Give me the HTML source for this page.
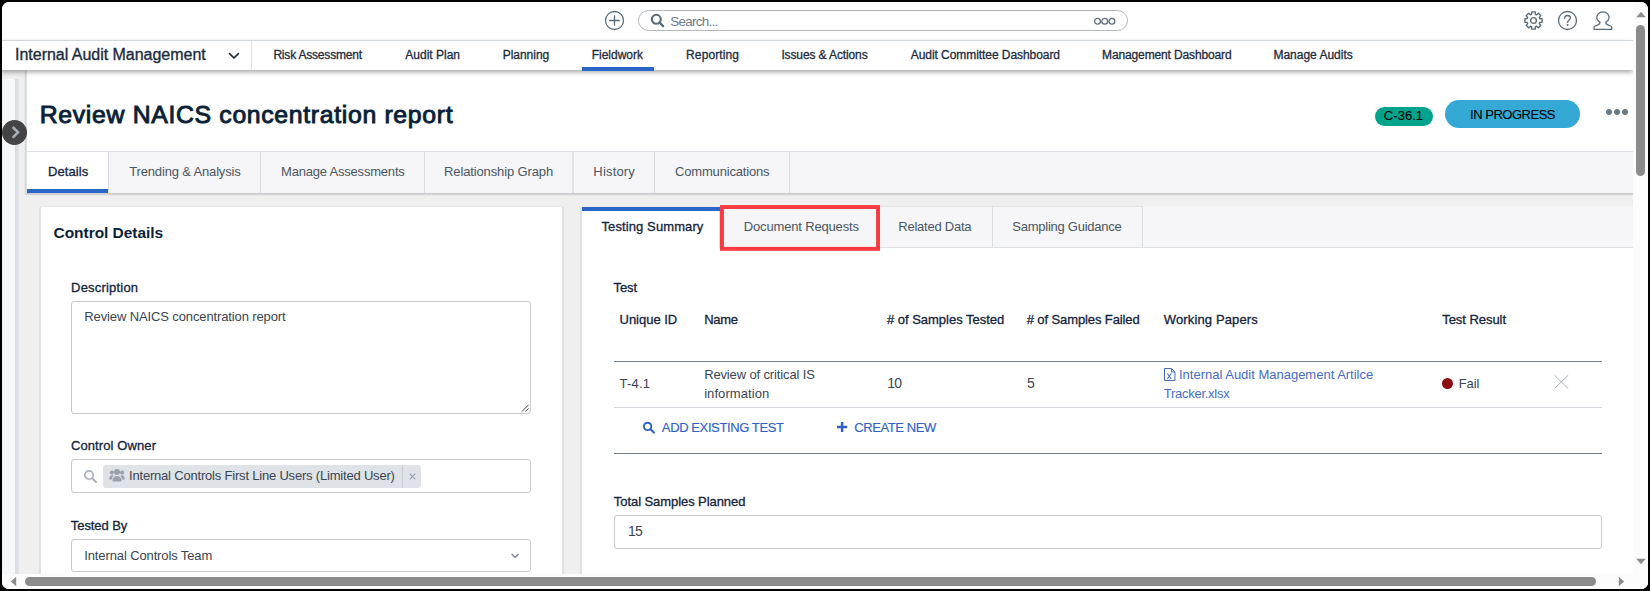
<!DOCTYPE html>
<html lang="en">
<head>
<meta charset="utf-8">
<title>Review NAICS concentration report</title>
<style>
html,body{margin:0;padding:0;width:1650px;height:591px;overflow:hidden;background:#000;font-family:"Liberation Sans",sans-serif;}
#win{position:absolute;left:2px;top:2px;width:1646px;height:587px;border-radius:7px;overflow:hidden;background:#fff;}
#pg{position:absolute;left:-2px;top:-2px;width:1650px;height:591px;}
#pg div,#pg svg{position:absolute;box-sizing:border-box;}
.t{white-space:pre;}
</style>
</head>
<body>
<div id="win"><div id="pg">

<!-- page background -->
<div style="left:0;top:70px;width:1633px;height:504px;background:#efefef;"></div>

<!-- collapsed left strip -->
<div style="left:3px;top:79px;width:12px;height:495px;background:#f6f7f8;border-top-right-radius:3px;"></div>
<div style="left:15px;top:79px;width:4px;height:495px;background:linear-gradient(90deg,#d9dde1 0,#dcdfe3 70%,#e8eaec 100%);"></div>

<!-- header card -->
<div style="left:26px;top:70px;width:1607px;height:123px;background:#fff;border-left:1px solid #dcdee0;box-shadow:0 1px 2px rgba(0,0,0,.32);"></div>
<!-- main tab bar -->
<div style="left:27px;top:151px;width:1606px;height:42px;background:#f6f6f8;border-top:1px solid #dde1e5;"></div>
<div style="left:27px;top:152px;width:81px;height:41px;background:#fff;"></div>
<div style="left:27px;top:193px;width:1606px;height:1px;background:#c9cbce;"></div>
<div style="left:27px;top:189px;width:81px;height:4px;background:#2866c8;"></div>
<div style="left:108px;top:152px;width:1px;height:41px;background:#dadee2;"></div>
<div style="left:260px;top:152px;width:1px;height:41px;background:#dadee2;"></div>
<div style="left:424px;top:152px;width:1px;height:41px;background:#dadee2;"></div>
<div style="left:572px;top:152px;width:2px;height:41px;background:#dfe2e6;"></div>
<div style="left:654px;top:152px;width:1px;height:41px;background:#dadee2;"></div>
<div style="left:789px;top:152px;width:1px;height:41px;background:#dadee2;"></div>

<!-- top bar -->
<div style="left:0;top:0;width:1633px;height:41px;background:#fff;border-bottom:1px solid #dfe4e8;"></div>
<!-- nav bar -->
<div style="left:0;top:41px;width:1633px;height:29px;background:#fff;box-shadow:0 2px 5px rgba(0,0,0,.36);"></div>
<div style="left:251px;top:41px;width:1px;height:29px;background:#dfe3e6;"></div>
<div style="left:582px;top:67px;width:72px;height:4px;background:#2866c8;z-index:2;"></div>
<!-- nav chevron -->
<svg style="left:227px;top:50px" width="14" height="12" viewBox="0 0 14 12"><path d="M2.6 3.6 L7 8 L11.4 3.6" fill="none" stroke="#1d2c3d" stroke-width="1.7" stroke-linecap="round" stroke-linejoin="round"/></svg>

<!-- plus circle -->
<svg style="left:604px;top:10px" width="21" height="21" viewBox="0 0 21 21"><circle cx="10.5" cy="10.5" r="9" fill="none" stroke="#5b6b79" stroke-width="1.3"/><path d="M10.5 5.2V15.8M5.2 10.5H15.8" stroke="#5b6b79" stroke-width="1.3" fill="none"/></svg>
<!-- search box -->
<div style="left:638px;top:10px;width:490px;height:21px;border:1px solid #b4b7ba;border-radius:11px;background:#fff;"></div>
<svg style="left:650px;top:13px" width="15" height="15" viewBox="0 0 15 15"><circle cx="6.3" cy="6.3" r="4.5" fill="none" stroke="#596b79" stroke-width="2.1"/><path d="M9.8 9.8 L13.1 13.1" stroke="#596b79" stroke-width="2.3" stroke-linecap="round"/></svg>
<svg style="left:1092px;top:16px" width="26" height="10" viewBox="0 0 26 10"><g fill="none" stroke="#5b6b79" stroke-width="1.3"><circle cx="5.5" cy="5.2" r="2.9"/><circle cx="12.7" cy="5.2" r="2.9"/><circle cx="19.9" cy="5.2" r="2.9"/></g></svg>

<!-- gear -->
<svg style="left:1523px;top:10px" width="21" height="21" viewBox="0 0 21 21"><g fill="none" stroke="#5b6b79" stroke-width="1.4" stroke-linejoin="round"><path d="M8.60 4.28 L8.75 1.88 L12.25 1.88 L12.40 4.28 L13.55 4.76 L15.36 3.16 L17.84 5.64 L16.24 7.45 L16.72 8.60 L19.12 8.75 L19.12 12.25 L16.72 12.40 L16.24 13.55 L17.84 15.36 L15.36 17.84 L13.55 16.24 L12.40 16.72 L12.25 19.12 L8.75 19.12 L8.60 16.72 L7.45 16.24 L5.64 17.84 L3.16 15.36 L4.76 13.55 L4.28 12.40 L1.88 12.25 L1.88 8.75 L4.28 8.60 L4.76 7.45 L3.16 5.64 L5.64 3.16 L7.45 4.76Z"/><circle cx="10.5" cy="10.5" r="2.9"/></g></svg>
<!-- help -->
<svg style="left:1557px;top:10px" width="21" height="21" viewBox="0 0 21 21"><circle cx="10.5" cy="10.5" r="9" fill="none" stroke="#5b6b79" stroke-width="1.3"/><path d="M7.7 8.3c0-1.7 1.2-2.8 2.9-2.8 1.6 0 2.8 1 2.8 2.5 0 2.1-2.8 2.3-2.8 4.4" fill="none" stroke="#5b6b79" stroke-width="1.3" stroke-linecap="round"/><circle cx="10.6" cy="15" r="0.95" fill="#5b6b79"/></svg>
<!-- user -->
<svg style="left:1592px;top:10px" width="22" height="21" viewBox="0 0 22 21"><path d="M8 12.2 C8 13.8 7 14.600 4.800 15.400 L3.100 16 Q2.050 16.350 2.050 17.400 V19.350 H19.750 V17.400 Q19.750 16.350 18.700 16 L17 15.400 C14.800 14.600 13.800 13.800 13.800 12.200 A6.150 5.500 0 1 0 8 12.200 Z" fill="none" stroke="#5b6b79" stroke-width="1.3" stroke-linejoin="round"/></svg>

<!-- toggle circle -->
<div style="left:2px;top:120px;width:25px;height:25px;border-radius:50%;background:#444446;"></div>
<svg style="left:8px;top:125px" width="14" height="15" viewBox="0 0 14 15"><path d="M4.700 2 L10 7.300 L4.700 12.600" fill="none" stroke="#a5aeb7" stroke-width="2.600" stroke-linecap="butt" stroke-linejoin="miter"/></svg>

<!-- badge + status -->
<div style="left:1375px;top:107px;width:58px;height:19px;border-radius:10px;background:#00a38c;"></div>
<div style="left:1445px;top:100px;width:135px;height:28px;border-radius:14px;background:#35a9d6;"></div>
<div style="left:1605.5px;top:108.7px;width:6.4px;height:6.4px;border-radius:50%;background:#6b7986;"></div>
<div style="left:1613.6px;top:108.7px;width:6.4px;height:6.4px;border-radius:50%;background:#6b7986;"></div>
<div style="left:1621.7px;top:108.7px;width:6.4px;height:6.4px;border-radius:50%;background:#6b7986;"></div>

<!-- left panel -->
<div style="left:39px;top:206px;width:525px;height:400px;background:#fff;border:1px solid #e3e6e9;border-left:2px solid #dfe2e5;border-right:2px solid #dfe2e5;border-radius:3px;"></div>
<!-- textarea -->
<div style="left:71px;top:301px;width:460px;height:113px;border:1px solid #c8cacc;border-radius:3px;background:#fff;"></div>
<svg style="left:518px;top:401px" width="12" height="12" viewBox="0 0 12 12"><path d="M3.800 10.600 L10.600 3.800 M7.400 10.600 L10.600 7.400" stroke="#4a4a4a" stroke-width="1" fill="none"/></svg>
<!-- control owner -->
<div style="left:71px;top:459px;width:460px;height:34px;border:1px solid #c8cacc;border-radius:3px;background:#fff;"></div>
<svg style="left:83px;top:469px" width="15" height="15" viewBox="0 0 15 15"><circle cx="6" cy="6" r="4.2" fill="none" stroke="#a9b3bd" stroke-width="1.7"/><path d="M9.200 9.200 L13 13" stroke="#a9b3bd" stroke-width="2" stroke-linecap="round"/></svg>
<div style="left:103px;top:465px;width:318px;height:23px;border-radius:3px;background:#dfe3e7;"></div>
<div style="left:402px;top:465px;width:1px;height:23px;background:#c6ccd2;"></div>
<svg style="left:109px;top:468px" width="16" height="14" viewBox="0 0 16 14"><g fill="#9aa1a8"><circle cx="8" cy="4" r="3"/><path d="M3.300 13.500c0-3.500 1.700-5.500 4.700-5.500s4.700 2 4.700 5.500z"/><circle cx="2.900" cy="4.600" r="2.100"/><circle cx="13.100" cy="4.600" r="2.100"/><path d="M0.300 11.500c0-2.800 1-4.300 2.900-4.300 .6 0 1.100 .2 1.500 .5-1 1-1.700 2.200-1.800 3.800z"/><path d="M15.700 11.500c0-2.800-1-4.300-2.900-4.300-.6 0-1.100 .2-1.500 .5 1 1 1.700 2.200 1.800 3.800z"/></g></svg>
<svg style="left:407px;top:471px" width="11" height="11" viewBox="0 0 11 11"><path d="M2.700 2.700 L8.300 8.300 M8.300 2.700 L2.700 8.300" stroke="#959da5" stroke-width="1.1" fill="none"/></svg>
<!-- tested by -->
<div style="left:71px;top:539px;width:460px;height:33px;border:1px solid #c8cacc;border-radius:3px;background:#fff;"></div>
<svg style="left:509px;top:550px" width="12" height="10" viewBox="0 0 12 10"><path d="M2.900 4.300 L6.100 7.400 L9.300 4.300" fill="none" stroke="#6f7a85" stroke-width="1.2" stroke-linecap="round" stroke-linejoin="round"/></svg>

<!-- right panel -->
<div style="left:580px;top:206px;width:1061px;height:400px;background:#fff;border:1px solid #e3e6e9;border-left:2px solid #dfe2e5;border-radius:3px 0 0 0;"></div>
<div style="left:582px;top:206px;width:1051px;height:42px;background:#f6f6f8;border-bottom:1px solid #dde0e3;"></div>
<div style="left:720px;top:206px;width:423px;height:1px;background:#dfe3e6;"></div>
<div style="left:582px;top:206px;width:138px;height:1px;background:#efeeea;"></div>
<div style="left:582px;top:207px;width:138px;height:41px;background:#fff;border-right:1px solid #dcdfe2;"></div>
<div style="left:582px;top:207px;width:138px;height:4px;background:#2866c8;"></div>
<div style="left:992px;top:206px;width:1px;height:41px;background:#dcdfe2;"></div>
<div style="left:1142px;top:206px;width:1px;height:41px;background:#dcdfe2;"></div>
<!-- red highlight -->
<svg style="left:716px;top:201px" width="168" height="54" viewBox="716 201 168 54"><rect x="721.95" y="207.05" width="156.1" height="41.8" fill="none" stroke="#f73b41" stroke-width="3.9"/></svg>

<!-- table lines -->
<div style="left:614px;top:361px;width:988px;height:1px;background:#77828d;"></div>
<div style="left:614px;top:407px;width:988px;height:1px;background:#d5d9dd;"></div>
<div style="left:614px;top:453px;width:988px;height:1px;background:#6f7b87;"></div>
<!-- file icon -->
<svg style="left:1163px;top:367px" width="14" height="15" viewBox="0 0 14 15"><path d="M1.500 1.500h7l3.500 3.500v8.500h-10.500z" fill="none" stroke="#466cc9" stroke-width="1"/><path d="M8.500 1.500v3.500h3.500" fill="none" stroke="#466cc9" stroke-width="1"/><path d="M4.300 6.500l4 5.500M8.300 6.500l-4 5.500" stroke="#466cc9" stroke-width="1.100" fill="none"/></svg>
<!-- fail dot -->
<div style="left:1441.700px;top:377.500px;width:11.400px;height:11.400px;border-radius:50%;background:#8c0c14;"></div>
<!-- remove X -->
<svg style="left:1553px;top:374px" width="17" height="16" viewBox="0 0 17 16"><path d="M1.500 1.300 L15.200 14.500 M15.200 1.300 L1.500 14.500" stroke="#aab3bb" stroke-width="1" fill="none"/></svg>
<!-- add existing icon -->
<svg style="left:642px;top:420px" width="15" height="15" viewBox="0 0 15 15"><circle cx="5.600" cy="6.400" r="3.700" fill="none" stroke="#2f62c6" stroke-width="1.900"/><path d="M8.500 9.300 L11.900 12.600" stroke="#2f62c6" stroke-width="2.100" stroke-linecap="round"/></svg>
<!-- create new plus -->
<svg style="left:836px;top:421px" width="12" height="12" viewBox="0 0 12 12"><path d="M6.100 0.900V11.100M1 6H11.200" stroke="#2f62c6" stroke-width="2.500" fill="none"/></svg>
<!-- total samples input -->
<div style="left:614px;top:515px;width:988px;height:34px;border:1px solid #c8cacc;border-radius:3px;background:#fff;"></div>

<!-- TEXT LAYER -->
<div class="t" style="left:670.33px;top:15.00px;font-size:13.5px;line-height:13.5px;color:#6e7c88;letter-spacing:-0.765px;">Search...</div>
<div class="t" style="left:15.06px;top:47.00px;font-size:16px;line-height:16px;color:#1d2c3d;letter-spacing:-0.023px;-webkit-text-stroke:0.35px #1d2c3d;">Internal Audit Management</div>
<div class="t" style="left:273.40px;top:49.00px;font-size:12px;line-height:12px;color:#1d2c3d;letter-spacing:-0.193px;-webkit-text-stroke:0.3px #1d2c3d;">Risk Assessment</div>
<div class="t" style="left:405.30px;top:49.00px;font-size:12px;line-height:12px;color:#1d2c3d;letter-spacing:0.000px;-webkit-text-stroke:0.3px #1d2c3d;">Audit Plan</div>
<div class="t" style="left:502.70px;top:49.00px;font-size:12px;line-height:12px;color:#1d2c3d;letter-spacing:-0.026px;-webkit-text-stroke:0.3px #1d2c3d;">Planning</div>
<div class="t" style="left:591.70px;top:49.00px;font-size:12px;line-height:12px;color:#1d2c3d;letter-spacing:0.000px;-webkit-text-stroke:0.3px #1d2c3d;">Fieldwork</div>
<div class="t" style="left:686.10px;top:49.00px;font-size:12px;line-height:12px;color:#1d2c3d;letter-spacing:0.113px;-webkit-text-stroke:0.3px #1d2c3d;">Reporting</div>
<div class="t" style="left:781.40px;top:49.00px;font-size:12px;line-height:12px;color:#1d2c3d;letter-spacing:-0.120px;-webkit-text-stroke:0.3px #1d2c3d;">Issues &amp; Actions</div>
<div class="t" style="left:910.73px;top:49.00px;font-size:12px;line-height:12px;color:#1d2c3d;letter-spacing:-0.060px;-webkit-text-stroke:0.3px #1d2c3d;">Audit Committee Dashboard</div>
<div class="t" style="left:1102.10px;top:49.00px;font-size:12px;line-height:12px;color:#1d2c3d;letter-spacing:-0.133px;-webkit-text-stroke:0.3px #1d2c3d;">Management Dashboard</div>
<div class="t" style="left:1273.40px;top:49.00px;font-size:12px;line-height:12px;color:#1d2c3d;letter-spacing:0.000px;-webkit-text-stroke:0.3px #1d2c3d;">Manage Audits</div>
<div class="t" style="left:39.76px;top:103.00px;font-size:24.8px;line-height:24.8px;color:#0c1f38;letter-spacing:0.669px;-webkit-text-stroke:0.95px #0c1f38;">Review NAICS concentration report</div>
<div class="t" style="left:1383.85px;top:109.00px;font-size:13px;line-height:13px;color:#000;letter-spacing:0.036px;-webkit-text-stroke:0.1px #000;">C-36.1</div>
<div class="t" style="left:1470.05px;top:108.00px;font-size:13px;line-height:13px;color:#000;letter-spacing:-0.486px;-webkit-text-stroke:0.1px #000;">IN PROGRESS</div>
<div class="t" style="left:47.95px;top:165.00px;font-size:13px;line-height:13px;color:#14243a;letter-spacing:0.090px;-webkit-text-stroke:0.3px #14243a;">Details</div>
<div class="t" style="left:129.25px;top:165.00px;font-size:13px;line-height:13px;color:#4b5561;letter-spacing:-0.160px;">Trending &amp; Analysis</div>
<div class="t" style="left:281.05px;top:165.00px;font-size:13px;line-height:13px;color:#4b5561;letter-spacing:-0.201px;">Manage Assessments</div>
<div class="t" style="left:444.02px;top:165.00px;font-size:13px;line-height:13px;color:#4b5561;letter-spacing:-0.127px;">Relationship Graph</div>
<div class="t" style="left:593.35px;top:165.00px;font-size:13px;line-height:13px;color:#4b5561;letter-spacing:0.180px;">History</div>
<div class="t" style="left:675.05px;top:165.00px;font-size:13px;line-height:13px;color:#4b5561;letter-spacing:-0.180px;">Communications</div>
<div class="t" style="left:53.52px;top:225.00px;font-size:15.5px;line-height:15.5px;color:#0c1f38;letter-spacing:-0.039px;font-weight:700;">Control Details</div>
<div class="t" style="left:601.49px;top:220.00px;font-size:13px;line-height:13px;color:#14243a;letter-spacing:0.103px;-webkit-text-stroke:0.3px #14243a;">Testing Summary</div>
<div class="t" style="left:743.85px;top:220.00px;font-size:13px;line-height:13px;color:#4b5561;letter-spacing:-0.169px;">Document Requests</div>
<div class="t" style="left:898.35px;top:220.00px;font-size:13px;line-height:13px;color:#4b5561;letter-spacing:-0.245px;">Related Data</div>
<div class="t" style="left:1012.35px;top:220.00px;font-size:13px;line-height:13px;color:#4b5561;letter-spacing:-0.259px;">Sampling Guidance</div>
<div class="t" style="left:71.05px;top:281.00px;font-size:13px;line-height:13px;color:#14243a;letter-spacing:0.198px;-webkit-text-stroke:0.3px #14243a;">Description</div>
<div class="t" style="left:84.35px;top:310.00px;font-size:13px;line-height:13px;color:#3a4550;letter-spacing:-0.124px;">Review NAICS concentration report</div>
<div class="t" style="left:70.95px;top:439.00px;font-size:13px;line-height:13px;color:#14243a;letter-spacing:0.105px;-webkit-text-stroke:0.3px #14243a;">Control Owner</div>
<div class="t" style="left:129.02px;top:469.00px;font-size:13px;line-height:13px;color:#3a4550;letter-spacing:-0.195px;">Internal Controls First Line Users (Limited User)</div>
<div class="t" style="left:70.85px;top:519.00px;font-size:13px;line-height:13px;color:#14243a;letter-spacing:-0.090px;-webkit-text-stroke:0.3px #14243a;">Tested By</div>
<div class="t" style="left:84.25px;top:549.00px;font-size:13px;line-height:13px;color:#3a4550;letter-spacing:-0.120px;">Internal Controls Team</div>
<div class="t" style="left:613.45px;top:281.00px;font-size:13px;line-height:13px;color:#14243a;letter-spacing:-0.060px;-webkit-text-stroke:0.3px #14243a;">Test</div>
<div class="t" style="left:619.55px;top:313.00px;font-size:13px;line-height:13px;color:#14243a;letter-spacing:-0.023px;-webkit-text-stroke:0.3px #14243a;">Unique ID</div>
<div class="t" style="left:704.15px;top:313.00px;font-size:13px;line-height:13px;color:#14243a;letter-spacing:-0.240px;-webkit-text-stroke:0.3px #14243a;">Name</div>
<div class="t" style="left:886.91px;top:313.00px;font-size:13px;line-height:13px;color:#14243a;letter-spacing:-0.010px;-webkit-text-stroke:0.3px #14243a;"># of Samples Tested</div>
<div class="t" style="left:1026.75px;top:313.00px;font-size:13px;line-height:13px;color:#14243a;letter-spacing:-0.110px;-webkit-text-stroke:0.3px #14243a;"># of Samples Failed</div>
<div class="t" style="left:1163.85px;top:313.00px;font-size:13px;line-height:13px;color:#14243a;letter-spacing:0.125px;-webkit-text-stroke:0.3px #14243a;">Working Papers</div>
<div class="t" style="left:1442.25px;top:313.00px;font-size:13px;line-height:13px;color:#14243a;letter-spacing:-0.054px;-webkit-text-stroke:0.3px #14243a;">Test Result</div>
<div class="t" style="left:619.55px;top:377.00px;font-size:13px;line-height:13px;color:#3a4550;letter-spacing:0.225px;">T-4.1</div>
<div class="t" style="left:704.15px;top:368.00px;font-size:13px;line-height:13px;color:#3a4550;letter-spacing:-0.135px;">Review of critical IS</div>
<div class="t" style="left:704.15px;top:387.00px;font-size:13px;line-height:13px;color:#3a4550;letter-spacing:0.072px;">information</div>
<div class="t" style="left:887.30px;top:376.00px;font-size:14px;line-height:14px;color:#3a4550;letter-spacing:-0.720px;">10</div>
<div class="t" style="left:1027.10px;top:376.00px;font-size:14px;line-height:14px;color:#3a4550;letter-spacing:0.800px;">5</div>
<div class="t" style="left:1179.02px;top:368.00px;font-size:13px;line-height:13px;color:#466cc9;letter-spacing:-0.006px;">Internal Audit Management Artilce</div>
<div class="t" style="left:1163.85px;top:387.00px;font-size:13px;line-height:13px;color:#466cc9;letter-spacing:-0.278px;">Tracker.xlsx</div>
<div class="t" style="left:1458.75px;top:377.00px;font-size:13px;line-height:13px;color:#3a4550;letter-spacing:-0.120px;">Fail</div>
<div class="t" style="left:661.87px;top:421.00px;font-size:13px;line-height:13px;color:#2f62c6;letter-spacing:-0.394px;-webkit-text-stroke:0.15px #2f62c6;">ADD EXISTING TEST</div>
<div class="t" style="left:854.35px;top:421.00px;font-size:13px;line-height:13px;color:#2f62c6;letter-spacing:-0.420px;-webkit-text-stroke:0.15px #2f62c6;">CREATE NEW</div>
<div class="t" style="left:613.85px;top:495.00px;font-size:13px;line-height:13px;color:#14243a;letter-spacing:-0.072px;-webkit-text-stroke:0.3px #14243a;">Total Samples Planned</div>
<div class="t" style="left:627.90px;top:524.00px;font-size:14px;line-height:14px;color:#3a4550;letter-spacing:-0.720px;">15</div>

<!-- vertical scrollbar -->
<div style="left:1633px;top:0;width:17px;height:591px;background:#fcfcfc;"></div>
<svg style="left:1635.500px;top:11px" width="10" height="7" viewBox="0 0 10 7"><path d="M0.200 6.200 L5 0.800 L9.800 6.200z" fill="#8b8b8b"/></svg>
<div style="left:1636px;top:24.500px;width:9px;height:151px;border-radius:4.500px;background:#8b8b8b;"></div>
<svg style="left:1635.500px;top:558px" width="10" height="7" viewBox="0 0 10 7"><path d="M0.200 0.800 L5 6.200 L9.800 0.800z" fill="#8b8b8b"/></svg>
<!-- horizontal scrollbar -->
<div style="left:0;top:574px;width:1650px;height:17px;background:#fcfcfc;"></div>
<svg style="left:10px;top:576px" width="7" height="11" viewBox="0 0 7 11"><path d="M6.200 0.800 L0.800 5.500 L6.200 10.200z" fill="#8b8b8b"/></svg>
<div style="left:25px;top:577px;width:1571px;height:9px;border-radius:4.500px;background:#8b8b8b;"></div>
<svg style="left:1618px;top:576px" width="7" height="11" viewBox="0 0 7 11"><path d="M0.800 0.800 L6.200 5.500 L0.800 10.200z" fill="#8b8b8b"/></svg>

</div></div>
</body>
</html>
